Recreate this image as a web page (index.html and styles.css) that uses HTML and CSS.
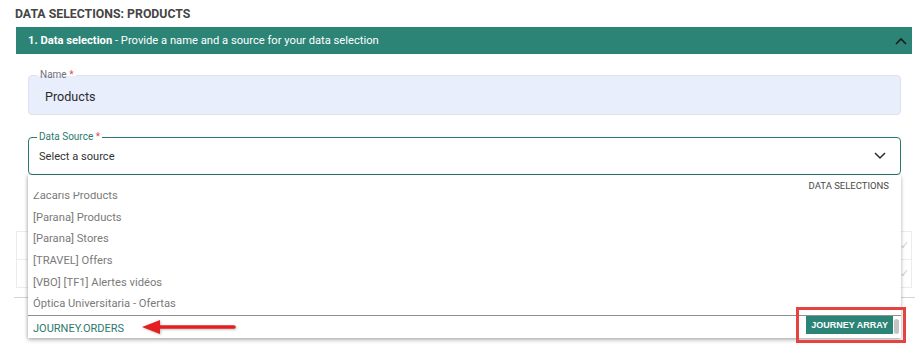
FILE: index.html
```html
<!DOCTYPE html>
<html lang="en">
<head>
  <meta charset="UTF-8" />
  <title>Data selections: Products</title>
  <link rel="stylesheet" href="styles.css">
</head>
<body>
  <div class="page">
    <h1 class="page-title">DATA SELECTIONS: PRODUCTS</h1>

    <div class="step">
      <div class="step-head">
        <span><b>1. Data selection</b> - Provide a name and a source for your data selection</span>
        <svg class="chev" width="12" height="8" viewBox="0 0 12 8"><path d="M1 7 L6 2 L11 7" fill="none" stroke="#1b1b1b" stroke-width="1.6"/></svg>
      </div>

      <div class="step-body">
        <div class="field filled">
          <label class="field-label">Name <span class="req">*</span></label>
          <div class="field-value">Products</div>
        </div>

        <div class="select-wrap">
          <fieldset class="select">
            <legend>Data Source <span class="req">*</span></legend>
            <span class="select-text">Select a source</span>
            <svg class="chev" width="12" height="8" viewBox="0 0 12 8"><path d="M1 1 L6 6 L11 1" fill="none" stroke="#2b2b2b" stroke-width="1.5"/></svg>
          </fieldset>

          <div class="menu">
            <div class="menu-head">DATA SELECTIONS</div>
            <div class="menu-list">
              <ul>
                <li>Zacaris Products</li>
                <li>[Parana] Products</li>
                <li>[Parana] Stores</li>
                <li>[TRAVEL] Offers</li>
                <li>[VBO] [TF1] Alertes vidéos</li>
                <li>Óptica Universitaria - Ofertas</li>
              </ul>
            </div>
            <div class="menu-foot">
              <span class="journey">JOURNEY.ORDERS</span>
              <span class="badge">JOURNEY ARRAY</span>
              <span class="thumb"></span>
            </div>
          </div>

          <div class="highlight"></div>
          <svg class="arrow" width="100" height="20" viewBox="0 0 100 20">
            <path d="M96 10 L20 10" stroke="#e3201f" stroke-width="3.5" stroke-linecap="round"/>
            <path d="M4 10 L22 3 L22 17 Z" fill="#e3201f"/>
          </svg>
        </div>

        <div class="behind">
          <div class="behind-row"><span class="tick">✓</span></div>
          <div class="behind-row"><span class="tick">✓</span></div>
        </div>
      </div>
      <div class="rule"></div>
    </div>
  </div>
</body>
</html>
```

FILE: styles.css
```css
body {
  margin: 0;
  font-family: Roboto, "Liberation Sans", sans-serif;
  background: #fff;
  color: #333;
}
.page {
  min-height: 358px;
  box-sizing: border-box;
  padding: 6px 3px 0 15px;
}
.page-title {
  margin: 0 0 5px 0;
  font-size: 12.3px;
  font-weight: 700;
  color: #454545;
  line-height: 16px;
}
.step {
  margin-left: 1px;
}
.step-head {
  display: flex;
  align-items: center;
  justify-content: space-between;
  height: 27px;
  padding: 0 5px 0 12px;
  background: #2c8476;
  color: #fff;
  font-size: 11.2px;
}
.step-head b {
  font-weight: 700;
}
.step-body {
  padding: 21px 11px 0 12px;
}
.field {
  position: relative;
  height: 40px;
  border: 1px solid #dbe1ee;
  border-radius: 4px;
  background: #e8eefb;
  box-sizing: border-box;
  display: flex;
  align-items: center;
  padding-left: 16px;
}
.field-label {
  position: absolute;
  top: -6px;
  left: 8px;
  padding: 0 3px;
  font-size: 10px;
  line-height: 10px;
  color: #6f6f7a;
  background: linear-gradient(#fff 60%, transparent 60%);
}
.req {
  color: #e0524d;
}
.field-value {
  font-size: 12.6px;
  color: #2b2b2b;
  margin-top: 2px;
}
.select-wrap {
  position: relative;
  margin-top: 22px;
}
.select {
  margin: 0;
  height: 38px;
  box-sizing: border-box;
  border: 1px solid #2c7a6d;
  border-radius: 4px;
  padding: 0 14px 0 10px;
  display: flex;
  align-items: center;
  justify-content: space-between;
  position: relative;
}
.select legend {
  font-size: 10px;
  color: #2c7a6d;
  padding: 0 2px;
  line-height: 10px;
  position: absolute;
  top: -6px;
  left: 8px;
  background: #fff;
}
.select-text {
  font-size: 11.1px;
  color: #333;
  margin-top: 1px;
}
.menu {
  position: absolute;
  top: 38px;
  left: 0;
  right: 0;
  background: #fff;
  box-shadow: 0 2px 4px rgba(0,0,0,0.28), -1px 0 3px rgba(0,0,0,0.12);
  z-index: 2;
}
.menu-head {
  height: 12px;
  padding: 5px 12px 0 0;
  text-align: right;
  font-size: 9.5px;
  color: #4a4a4a;
  line-height: 12px;
}
.menu-list {
  height: 123px;
  overflow: hidden;
}
.menu-list ul {
  list-style: none;
  margin: -7px 0 0 0;
  padding: 0;
}
.menu-list li {
  height: 21.7px;
  line-height: 21.7px;
  padding-left: 5px;
  font-size: 11.2px;
  color: #7a7a7a;
}
.menu-foot {
  display: flex;
  align-items: center;
  height: 22px;
  border-top: 1px solid #909090;
  padding-left: 5px;
}
.journey {
  flex: 1;
  font-size: 11px;
  color: #2c7a6d;
  margin-top: 2px;
}
.badge {
  align-self: flex-start;
  background: #2c8476;
  color: #fff;
  font-family: "Liberation Sans", Arial, sans-serif;
  font-weight: 700;
  font-size: 9px;
  height: 18px;
  line-height: 18px;
  padding: 0 5px;
}
.thumb {
  width: 5px;
  height: 15px;
  margin: 3px 2px 0 1px;
  align-self: flex-start;
  border-radius: 3px;
  background: #c4c4c4;
}
.highlight {
  position: absolute;
  top: 170px;
  right: -5px;
  width: 104px;
  height: 30px;
  border: 3px solid #e4433f;
  z-index: 3;
}
.arrow {
  position: absolute;
  top: 180px;
  left: 110px;
  z-index: 3;
  filter: drop-shadow(1px 1px 1px rgba(0,0,0,0.25));
}
.behind {
  margin: 56px -11px 0 -12px;
}
.behind-row {
  height: 27px;
  border: 1px solid #ececec;
  border-bottom: none;
  display: flex;
  align-items: center;
  justify-content: flex-end;
}
.behind-row:last-child {
  border-bottom: 1px solid #ececec;
}
.tick {
  color: #d0d0d0;
  font-size: 11px;
  margin-right: 2px;
}
.rule {
  margin: 9px -3px 0 -2px;
  border-top: 1px solid #d4d4d4;
}
```
